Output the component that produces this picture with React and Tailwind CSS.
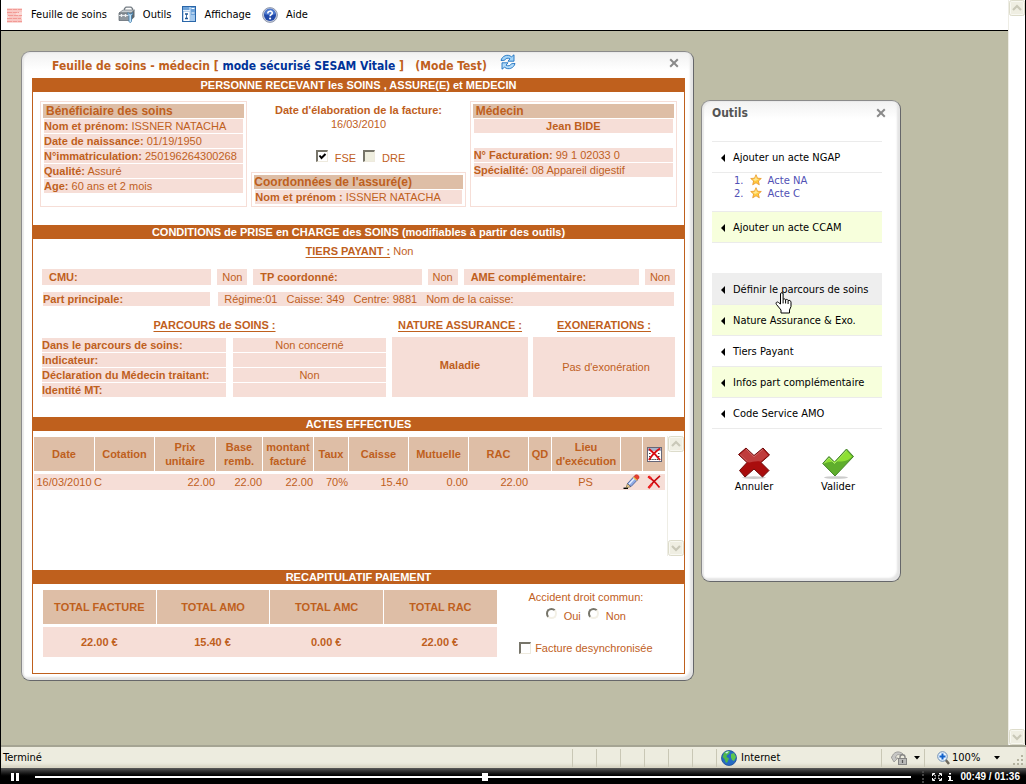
import React from "react";

function Chevron({ up }) {
  return (
    <svg viewBox="0 0 16 16" className="h-4 w-4" aria-hidden="true">
      <rect x="0.5" y="0.5" width="15" height="15" rx="2" fill="#efeee2" stroke="#dddccb" />
      <rect x="1.5" y="1.5" width="13" height="13" rx="1" fill="none" stroke="#f8f8f1" />
      <path d={up ? "M4 10 8 6l4 4" : "M4 6l4 4 4-4"} fill="none" stroke="#c9c8b8" strokeWidth="2.2" />
    </svg>
  );
}

function ScrollBar({ className = "" }) {
  return (
    <div className={`flex w-[17px] shrink-0 flex-col justify-between border-l border-[#eeede5] bg-white ${className}`}>
      <button type="button" aria-label="Défiler vers le haut"><Chevron up /></button>
      <button type="button" aria-label="Défiler vers le bas"><Chevron /></button>
    </div>
  );
}

function SheetIcon() {
  return (
    <svg viewBox="0 0 16 16" className="h-4 w-4" aria-hidden="true">
      <rect x="0" y="1" width="15" height="15" fill="#fbd9d6" />
      <path d="M0 2.5h15M0 5.5h12M1 8.5h14M0 11.5h14M0 14.5h15" stroke="#f29a95" strokeWidth="1" strokeDasharray="5 .5" />
      <path d="M0 4h15M0 7h9M2 10h12M0 13h15" stroke="#f7b6b1" strokeWidth="1" />
    </svg>
  );
}

function ToolboxIcon() {
  return (
    <svg viewBox="0 0 17 17" className="h-[17px] w-[17px]" aria-hidden="true">
      <path d="M6.500 4.500V2.500L8 1.200h5l1.500 1.300V5" fill="none" stroke="#777f86" strokeWidth="1.300" />
      <path d="M1 7 5 4h11.500L13 7z" fill="#c6ccd1" stroke="#6d757c" strokeWidth=".7" />
      <path d="M1 7h12v7.500H1z" fill="#8f979e" stroke="#596168" strokeWidth=".7" />
      <path d="m13 7 3.500-3v7L13 14.500z" fill="#5f686f" />
      <path d="M1 9.500h12" stroke="#e4e8eb" strokeWidth="1" />
      <path d="M3.500 8v3M7.500 8v3" stroke="#eef1f3" strokeWidth="1.300" />
      <path d="M10 6.500c-.5 2 .5 2.800 1 3V15.500c.5 1.300 2 1.300 2.500 0v-6c.8-.5 1.500-1.500 1-3l-1 1.500h-2z" fill="#c3e3f8" stroke="#3f7bab" strokeWidth=".8" />
    </svg>
  );
}

function ViewIcon() {
  return (
    <svg viewBox="0 0 14 17" className="h-[17px] w-[14px]" aria-hidden="true">
      <rect x=".5" y=".5" width="13" height="15" fill="#6ea3d9" stroke="#2a66a8" />
      <path d="M1 4.500h7" stroke="#e2effb" strokeWidth="1" />
      <path d="M8 1v14" stroke="#dcebfa" strokeWidth="1" />
      <rect x="1.500" y="5.500" width="6" height="9.500" fill="#fff" />
      <path d="M3 8h3M3 12.500h3" stroke="#1d5593" strokeWidth="1.600" />
      <path d="M4.500 8v4.500" stroke="#1d5593" strokeWidth=".8" />
      <path d="M9.500 2.500h3M9.500 7h3" stroke="#fff" strokeWidth="1" />
      <rect x="9" y="9" width="4" height="6" fill="#a5caee" />
    </svg>
  );
}

function HelpIcon() {
  return (
    <svg viewBox="0 0 16 16" className="h-4 w-4" aria-hidden="true">
      <circle cx="8" cy="8" r="7.400" fill="#c8cfdf" stroke="#7b859d" strokeWidth=".8" />
      <circle cx="8" cy="8" r="6" fill="#2149a8" />
      <path d="M2.500 7a5.500 5.500 0 0 1 11 0c-3 1.500-8 1.500-11 0z" fill="#4d79cf" />
      <path d="M5.800 6.400c0-3 4.500-2.800 4.500-.4 0 1.700-2.200 1.600-2.200 3.200" fill="none" stroke="#fff" strokeWidth="1.600" />
      <circle cx="8.100" cy="11.500" r="1.100" fill="#fff" />
    </svg>
  );
}

function RefreshIcon() {
  return (
    <svg viewBox="0 0 16 16" className="h-4 w-4" aria-hidden="true">
      <path d="M1 6.500C2 2 7.500-.5 11.500 2.800L14 .8v6.400H8l2-2.400C7.800 3.500 5.500 4.300 4.500 6.300z" fill="#a3d4f8" stroke="#1c6fc0" strokeWidth=".9" />
      <path d="M15 9.500C14 14 8.500 16.500 4.500 13.200L2 15.200V8.800h6l-2 2.400c2.200 1.300 4.500.5 5.500-1.500z" fill="#b4dcf9" stroke="#1c6fc0" strokeWidth=".9" />
    </svg>
  );
}

function CloseIcon() {
  return (
    <svg viewBox="0 0 10 10" className="h-[10px] w-[10px]" aria-hidden="true">
      <path d="m1.200 1.200 7.600 7.600M8.800 1.200 1.200 8.800" stroke="#8a8a8a" strokeWidth="2" />
    </svg>
  );
}

function RedCross() {
  return (
    <svg viewBox="0 0 14 14" className="mx-auto h-[14px] w-[14px]" aria-hidden="true">
      <path d="M1 1.500C5 4 9 8 12.500 12.500" stroke="#d80d12" strokeWidth="1.700" fill="none" />
      <path d="M13 .8C9 4 5 8 1.500 13" stroke="#c4080d" strokeWidth="1.700" fill="none" />
      <path d="M1.500 13 5 9M1.500 1.500 4 3.500" stroke="#e22" strokeWidth="2.500" />
    </svg>
  );
}

function DeleteAllIcon() {
  return (
    <svg viewBox="0 0 15 15" className="mx-auto h-[15px] w-[15px]" aria-hidden="true">
      <rect x=".5" y=".5" width="14" height="14" fill="#fff" stroke="#667" />
      <path d="M1 2.500h13" stroke="#a9b2c8" strokeWidth="3" />
      <path d="M2 6.500h2M11 6.500h2M2 9.500h2M11 9.500h2M3 12.500h9" stroke="#444" strokeWidth="1.200" strokeDasharray="1.500 .7" />
      <path d="M2 2c4 3 8 7 11 11M13 1.500C9 4 5 8 2 13" stroke="#d80d12" strokeWidth="2" fill="none" />
    </svg>
  );
}

function PencilIcon() {
  return (
    <svg viewBox="0 0 17 16" className="mx-auto h-4 w-[17px]" aria-hidden="true">
      <path d="M.5 14.300h4.500" stroke="#000" strokeWidth="1.400" />
      <path d="M3 14 4.500 9.500l3.500 3z" fill="#e9c68d" stroke="#553" strokeWidth=".6" />
      <path d="m4.500 9.500 6.200-6.700 3.600 3.200L8 12.600z" fill="#8fabe6" stroke="#3d548f" strokeWidth=".8" />
      <path d="m6 10.200 5.800-6.200" stroke="#e9f0ff" strokeWidth="1.300" />
      <path d="m10 3.600 3.500 3.200 1-1.100L11 2.500z" fill="#f0c540" />
      <path d="M11 2.500 12.300 1c2-1.200 4.700 1.200 3.500 3.300l-1.300 1.400z" fill="#e8402c" stroke="#a12" strokeWidth=".4" />
    </svg>
  );
}

function StarIcon() {
  return (
    <svg viewBox="0 0 12 12" className="h-3 w-3" aria-hidden="true">
      <path d="m6 .7 1.500 3.500 3.800.3-2.900 2.500.9 3.800L6 8.800l-3.300 2 .9-3.800L.7 4.500l3.800-.3z" fill="#ffc93c" stroke="#e8962a" strokeWidth=".8" />
      <path d="m6 2 .9 2.900L9 5.200 5 7 3 5.200l2-.4z" fill="#ffe792" />
    </svg>
  );
}

function CancelIcon() {
  return (
    <svg viewBox="0 0 32 32" className="h-8 w-8" aria-hidden="true">
      <ellipse cx="16" cy="30.600" rx="12" ry="1.300" fill="#ccc" />
      <path d="m8 1 8 7.500L25 1l6.500 7-8.500 7.500 8 8L24.500 30 16 22 7 30l-5.500-6.500L9 15.500.5 7.500z" fill="#a90d0d" stroke="#6d0b0b" strokeWidth="1" />
      <path d="m8 2 8 7.700 9-7.500 5.200 6-7.500 6.500C17 13 11 17 9.500 14.800L2 7.500z" fill="#bf3d3d" />
      <path d="m8 2 8 7.700 9-7.500M2 7.500l7.500 7.300" fill="none" stroke="#d67d7d" strokeWidth=".8" />
    </svg>
  );
}

function ValidateIcon() {
  return (
    <svg viewBox="0 0 32 32" className="h-8 w-8" aria-hidden="true">
      <ellipse cx="14" cy="30.500" rx="12" ry="1.300" fill="#ccc" />
      <path d="M.7 16.500 7 9.500l5.500 5.500L24.500 2l7 7.500L13 29z" fill="#5fae2c" stroke="#45852a" strokeWidth="1" />
      <path d="M2 16.500 7 11l5.500 5.500L24.500 3.500l5.500 6C23 18 14 12 2 16.500z" fill="#8ee032" />
      <path d="m2 16.500 5-5.500 5.500 5.500L24.500 3.500" fill="none" stroke="#b8f078" strokeWidth=".8" />
    </svg>
  );
}

function GlobeIcon() {
  return (
    <svg viewBox="0 0 16 16" className="h-4 w-4" aria-hidden="true">
      <circle cx="8" cy="8" r="7.500" fill="#256bc4" stroke="#1c4c94" strokeWidth=".8" />
      <path d="M3 3c2-2 5-2.300 6-1.500L8 4 6 5l-.5 2L8 8.500 6.500 12 5 13 3.500 9 1.500 7z" fill="#4fb84a" />
      <path d="m10 4 3-1 2 4-2 4-2-1-1-2.500z" fill="#5cc74e" />
      <path d="M4 3c2-2 4-1.500 4-1.500L6 3.500z" fill="#c7f2ff" />
    </svg>
  );
}

function HandCursor() {
  return (
    <svg viewBox="0 0 17 22" className="pointer-events-none absolute top-[18px] left-[63px] h-[22px] w-[17px]" aria-hidden="true">
      <path d="M5.500 2c0-1.800 2.600-1.800 2.600 0v5.500c.6-1 2.200-.8 2.500.3.800-.7 2.200-.4 2.500.7 1.300-.5 2.900.2 2.900 1.700v4.300l-1.500 3.500v3H6v-3L1.500 12.500c-1.300-2 .8-3.300 2-2L5.500 12z" fill="#fff" stroke="#000" strokeWidth="1" />
      <path d="M8.100 7.500v4M10.600 8v3.500M13.100 9v3" stroke="#000" strokeWidth="1" />
    </svg>
  );
}

function Window({ children, className = "" }) {
  return (
    <section
      className={`rounded-[9px] border border-t-[#8b8b8b] border-r-[#66676a] border-b-[#66676a] border-l-[#8b8b8b] bg-white bg-linear-to-b from-[#f1f1f1] to-white bg-[length:100%_18px] bg-no-repeat shadow-[inset_-3px_-3px_2px_#e4e4e4,inset_2px_1px_1px_#e9e9e9] ${className}`}
    >
      {children}
    </section>
  );
}

const band = "h-[14px] bg-[#bf601d] text-center text-[11px] leading-[14px] font-bold text-white";
const pink = "bg-[#f6ded7]";
const tan = "bg-[#debea6]";

function BoxTitle({ children }) {
  return <h3 className={`h-[14px] pl-[3px] text-[12px] leading-[14px] font-bold ${tan}`}>{children}</h3>;
}

function Line({ label, children, className = "" }) {
  return (
    <p className={`mx-px mt-px h-[14px] whitespace-nowrap ${pink} ${className}`}>
      <b>{label}</b> {children}
    </p>
  );
}

function Check({ id, checked, gray }) {
  return (
    <span className="grid h-3 w-3">
      <input
        id={id}
        type="checkbox"
        defaultChecked={checked}
        className={`peer h-3 w-3 appearance-none border border-t-2 border-l-2 border-t-[#77756a] border-r-[#eeeade] border-b-[#eeeade] border-l-[#77756a] [grid-area:1/1] ${gray ? "bg-[#efeedf]" : "bg-white"}`}
      />
      <svg viewBox="0 0 12 12" className="pointer-events-none hidden h-3 w-3 [grid-area:1/1] peer-checked:block" aria-hidden="true">
        <path d="m3.500 5.500 2 2.500L9.500 4" fill="none" stroke="#000" strokeWidth="2" />
      </svg>
    </span>
  );
}

function Radio({ id }) {
  return (
    <input
      id={id}
      name="accident"
      type="radio"
      className="mb-1 h-[11px] w-[11px] appearance-none rounded-full border-2 border-t-[#77756a] border-r-[#f3f0e6] border-b-[#f3f0e6] border-l-[#77756a] bg-white checked:bg-black"
    />
  );
}

function Patient() {
  return (
    <div className="grid h-[133px] grid-cols-[207fr_214fr_207fr] gap-1 px-[7px] pt-[9px] pb-[18px]">
      <div className="border border-[#f6ded7] p-[2px]">
        <BoxTitle>Bénéficiaire des soins</BoxTitle>
        <Line label="Nom et prénom:">ISSNER NATACHA</Line>
        <Line label="Date de naissance:">01/19/1950</Line>
        <Line label="N°immatriculation:">250196264300268</Line>
        <Line label="Qualité:">Assuré</Line>
        <Line label="Age:">60 ans et 2 mois</Line>
      </div>
      <div className="flex flex-col">
        <p className="pt-[2px] text-center font-bold">Date d'élaboration de la facture:</p>
        <p className="text-center">16/03/2010</p>
        <div className="mt-4 flex items-center justify-center gap-[7px] pl-1">
          <Check id="fse" checked />
          <label htmlFor="fse" className="pt-1">FSE</label>
          <Check id="dre" gray />
          <label htmlFor="dre" className="pt-1">DRE</label>
        </div>
        <div className="mt-auto border border-[#f6ded7] p-[2px]">
          <h3 className={`h-[14px] text-[12px] leading-[14px] font-bold ${tan}`}>Coordonnées de l'assuré(e)</h3>
          <Line label="Nom et prénom :">ISSNER NATACHA</Line>
        </div>
      </div>
      <div className="border border-[#f6ded7] p-[2px]">
        <BoxTitle>Médecin</BoxTitle>
        <Line label="Jean BIDE" className="text-center" />
        <div className="pt-[14px]">
          <Line label="N° Facturation:">99 1 02033 0</Line>
          <Line label="Spécialité:">08 Appareil digestif</Line>
        </div>
      </div>
    </div>
  );
}

const coverage = [["CMU:", "Non"], ["TP coordonné:", "Non"], ["AME complémentaire:", "Non"]];
const parcours = [
  ["Dans le parcours de soins:", "Non concerné"],
  ["Indicateur:", ""],
  ["Déclaration du Médecin traitant:", "Non"],
  ["Identité MT:", ""],
];

function Conditions() {
  return (
    <div className="h-[178px] px-[9px] pt-[5px]">
      <p className="pl-[2px] text-center"><b className="underline underline-offset-2">TIERS PAYANT :</b> Non</p>
      <div className="mt-[11px] grid grid-cols-[169fr_30px_168fr_30px_175fr_30px] gap-[6px] leading-4">
        {coverage.map(([name, value]) => (
          <React.Fragment key={name}>
            <b className={`h-4 pl-[7px] ${pink}`}>{name}</b>
            <span className={`h-4 text-center ${pink}`}>{value}</span>
          </React.Fragment>
        ))}
      </div>
      <div className="mt-[7px] grid grid-cols-[167fr_455fr] gap-2 px-px">
        <b className={pink}>Part principale:</b>
        <p className={`flex gap-[9px] pl-[6px] ${pink}`}>
          <span>Régime:01</span><span>Caisse: 349</span><span>Centre: 9881</span><span>Nom de la caisse:</span>
        </p>
      </div>
      <div className="mt-3 grid grid-cols-[345fr_136fr_142fr] gap-x-[5px]">
        <h3 className="text-center font-bold underline underline-offset-2">PARCOURS de SOINS :</h3>
        <h3 className="text-center font-bold underline underline-offset-2">NATURE ASSURANCE :</h3>
        <h3 className="text-center font-bold underline underline-offset-2">EXONERATIONS :</h3>
        <dl className="mt-[6px] grid grid-cols-[184fr_153fr] gap-x-[7px] gap-y-px pr-px">
          {parcours.map(([name, value]) => (
            <React.Fragment key={name}>
              <dt className={`h-[14px] font-bold whitespace-nowrap ${pink}`}>{name}</dt>
              <dd className={`h-[14px] text-center ${pink}`}>{value}</dd>
            </React.Fragment>
          ))}
        </dl>
        <p className={`mt-[5px] flex items-center justify-center pb-1 font-bold ${pink}`}>Maladie</p>
        <p className={`mt-[5px] flex items-center justify-center pl-1 ${pink}`}>Pas d'exonération</p>
      </div>
    </div>
  );
}

function Acts() {
  const th = `h-[34px] border-l border-white p-0 font-bold text-center ${tan}`;
  const td = `h-[19px] border-t-[3px] border-white p-0 text-right ${pink}`;
  return (
    <div className="flex h-[139px] items-start pt-[5px]">
      <table className="mt-px flex-1 table-fixed border-separate border-spacing-0">
        <colgroup>
          <col className="w-[61px]" /><col className="w-[60px]" /><col className="w-[61px]" /><col className="w-[47px]" />
          <col className="w-[51px]" /><col className="w-[35px]" /><col className="w-[60px]" /><col className="w-[60px]" />
          <col className="w-[60px]" /><col className="w-[23px]" /><col className="w-[69px]" /><col className="w-[22px]" /><col className="w-[23px]" />
        </colgroup>
        <thead>
          <tr>
            <th className={th}>Date</th>
            <th className={th}>Cotation</th>
            <th className={th}>Prix<br />unitaire</th>
            <th className={th}>Base<br />remb.</th>
            <th className={th}>montant<br />facturé</th>
            <th className={th}>Taux</th>
            <th className={th}>Caisse</th>
            <th className={th}>Mutuelle</th>
            <th className={th}>RAC</th>
            <th className={th}>QD</th>
            <th className={th}>Lieu<br />d'exécution</th>
            <th className={th}></th>
            <th className={th}><button type="button" aria-label="Tout supprimer" className="block w-full"><DeleteAllIcon /></button></th>
          </tr>
        </thead>
        <tbody>
          <tr>
            <td className={`${td} border-l`}><span className="block text-center">16/03/2010</span></td>
            <td className={td}><span className="block text-left">C</span></td>
            <td className={td}>22.00</td>
            <td className={td}>22.00</td>
            <td className={td}>22.00</td>
            <td className={td}>70%</td>
            <td className={td}>15.40</td>
            <td className={td}>0.00</td>
            <td className={td}>22.00</td>
            <td className={td}></td>
            <td className={td}><span className="block text-center">PS</span></td>
            <td className={td}><button type="button" aria-label="Modifier" className="block w-full"><PencilIcon /></button></td>
            <td className={td}><button type="button" aria-label="Supprimer" className="block w-full"><RedCross /></button></td>
          </tr>
        </tbody>
      </table>
      <ScrollBar className="ml-[2px] h-[120px]" />
    </div>
  );
}

function Recap() {
  const th = `h-[34px] border-l border-white p-0 font-bold text-center ${tan}`;
  const td = `h-[33px] border-t-[3px] border-white p-0 font-bold text-center ${pink}`;
  return (
    <div className="grid h-[89px] grid-cols-[454fr_178fr] items-start pt-[6px] pr-[9px] pl-[9px]">
      <table className="w-full table-fixed border-separate border-spacing-0">
        <thead>
          <tr>
            <th className={th}>TOTAL FACTURE</th>
            <th className={th}>TOTAL AMO</th>
            <th className={th}>TOTAL AMC</th>
            <th className={th}>TOTAL RAC</th>
          </tr>
        </thead>
        <tbody>
          <tr>
            <td className={`${td} border-l`}>22.00 €</td>
            <td className={td}>15.40 €</td>
            <td className={td}>0.00 €</td>
            <td className={td}>22.00 €</td>
          </tr>
        </tbody>
      </table>
      <div className="flex flex-col items-center">
        <p>Accident droit commun:</p>
        <div className="mt-1 flex items-center gap-[7px]">
          <Radio id="oui" /><label htmlFor="oui">Oui</label>
          <Radio id="non" /><label htmlFor="non">Non</label>
        </div>
        <div className="mt-[18px] flex items-center gap-1">
          <Check id="desync" /><label htmlFor="desync">Facture desynchronisée</label>
        </div>
      </div>
    </div>
  );
}

function Tool({ children, tone = "", cursor }) {
  return (
    <button type="button" className={`relative flex h-[31px] w-full items-center gap-[7px] border-b border-[#ebebeb] pt-px pl-2 text-left ${tone} ${cursor ? "z-10" : ""}`}>
      <svg viewBox="0 0 6 8" className="h-2 w-[6px]" aria-hidden="true"><path d="M5 0v8L1 4z" fill="#000" /></svg>
      {children}
      {cursor && <HandCursor />}
    </button>
  );
}

function Tools() {
  return (
    <Window className="mt-[49px] h-[482px] w-[200px] shrink-0 px-[10px] pt-1">
      <header className="flex items-center justify-between pr-1">
        <h2 className="text-[12px] leading-4 font-bold text-[#555]">Outils</h2>
        <button type="button" aria-label="Fermer les outils"><CloseIcon /></button>
      </header>
      <div className="mt-5 mr-2 text-black">
        <div className="border-t border-[#ebebeb]"><Tool>Ajouter un acte NGAP</Tool></div>
        <ol className="h-[39px] border-b border-[#ebebeb] pt-px pl-[22px] font-['DejaVu_Sans',sans-serif] text-[10px] leading-[13px] text-[#5151b5]">
          <li className="flex items-start gap-[6px]">1. <StarIcon /><a href="#na">Acte NA</a></li>
          <li className="flex items-start gap-[6px]">2. <StarIcon /><a href="#c">Acte C</a></li>
        </ol>
        <Tool tone="bg-[#f7ffdc]">Ajouter un acte CCAM</Tool>
        <div className="mt-[30px] border-t border-[#eeeeee]">
          <Tool tone="bg-[#eeeeee]" cursor>Définir le parcours de soins</Tool>
          <Tool tone="bg-[#f7ffdc]">Nature Assurance &amp; Exo.</Tool>
          <Tool>Tiers Payant</Tool>
          <Tool tone="bg-[#f7ffdc]">Infos part complémentaire</Tool>
          <Tool>Code Service AMO</Tool>
        </div>
      </div>
      <div className="mt-[18px] mr-[10px] grid grid-cols-2 text-black">
        <button type="button" className="flex flex-col items-center leading-4"><CancelIcon />Annuler</button>
        <button type="button" className="flex flex-col items-center leading-4"><ValidateIcon />Valider</button>
      </div>
    </Window>
  );
}

function Invoice() {
  return (
    <Window className="h-[630px] max-w-[673px] flex-1 pt-[2px] pr-2 pl-[10px]">
      <header className="flex h-6 items-start justify-between pr-[6px] pl-5">
        <div className="flex items-start gap-[13px]">
          <h1 className="pt-[2px] text-[12px] leading-5 font-bold whitespace-pre text-[#bf601d]">
            Feuille de soins - médecin [ <span className="text-[#003399]">mode sécurisé SESAM Vitale</span> ]   (Mode Test)
          </h1>
          <button type="button" aria-label="Actualiser"><RefreshIcon /></button>
        </div>
        <button type="button" aria-label="Fermer" className="mt-1"><CloseIcon /></button>
      </header>
      <div className="border border-t-0 border-[#bf601d] bg-white font-['Liberation_Sans',Arial,sans-serif] text-[11px] leading-[14px] text-[#bf601d]">
        <h2 className={band}>PERSONNE RECEVANT les SOINS , ASSURE(E) et MEDECIN</h2>
        <Patient />
        <h2 className={band}>CONDITIONS de PRISE en CHARGE des SOINS (modifiables à partir des outils)</h2>
        <Conditions />
        <h2 className={band}>ACTES EFFECTUES</h2>
        <Acts />
        <h2 className={band}>RECAPITULATIF PAIEMENT</h2>
        <Recap />
      </div>
    </Window>
  );
}

function Caret() {
  return <svg viewBox="0 0 6 4" className="h-1 w-[6px]" aria-hidden="true"><path d="M0 0h6L3 3.500z" fill="#000" /></svg>;
}

function StatusBar() {
  const cell = "h-[18px] w-6 border-l border-[#c9c7b5]";
  return (
    <div className="flex h-[23px] items-center border-t-2 border-[#a5a493] bg-[#edecdf] shadow-[inset_0_-3px_3px_#d8d5c4]">
      <p className="flex-1 pl-[2px]">Terminé</p>
      <span className={cell} /><span className={cell} /><span className={cell} /><span className={cell} /><span className={cell} /><span className={cell} />
      <div className="flex h-[18px] w-[165px] items-center gap-1 border-l border-[#c9c7b5] pl-1"><GlobeIcon />Internet</div>
      <div className="flex h-[18px] w-[43px] items-center gap-[6px] border-l border-[#c9c7b5] pl-[9px]">
        <svg viewBox="0 0 17 16" className="h-4 w-[17px]" aria-hidden="true">
          <path d="M1 7c1-5 7-7 11-3l-3 1C7 4 5 5 4.500 8L7 8 3 12 0 7z" fill="#c6c6c4" stroke="#8d8d8a" strokeWidth=".7" />
          <path d="M9 9V7c0-3 5-3 5 0v2" fill="none" stroke="#858583" strokeWidth="1.400" />
          <rect x="7.500" y="8.500" width="8" height="6" fill="#b9b9b7" stroke="#858583" />
          <path d="M11.500 10v3" stroke="#555" strokeWidth="1.200" />
        </svg>
        <Caret />
      </div>
      <div className="flex h-[18px] w-[102px] items-center border-l border-[#c9c7b5] pr-[2px] pl-3">
        <svg viewBox="0 0 13 14" className="mr-[2px] h-[14px] w-[13px]" aria-hidden="true">
          <path d="m8 8 4 5" stroke="#6f6a5e" strokeWidth="2.500" />
          <circle cx="5.500" cy="5.500" r="4.800" fill="#e6f3ff" stroke="#6d8db2" />
          <path d="M5.500 2.500v6M2.500 5.500h6" stroke="#1161c9" strokeWidth="2" />
        </svg>
        <span className="flex-1">100%</span>
        <Caret />
        <svg viewBox="0 0 12 12" className="mt-1 ml-3 h-3 w-3" aria-hidden="true">
          <path d="M9 2h2M5 6h2M9 6h2M1 10h2M5 10h2M9 10h2" stroke="#b5b3a0" strokeWidth="2" />
        </svg>
      </div>
    </div>
  );
}

function Player() {
  return (
    <div className="flex h-4 items-center bg-linear-to-b from-[#5a5a5a] to-black to-60% pt-[2px] pr-[6px] pl-[10px] text-white">
      <button type="button" aria-label="Pause" className="flex gap-[2px]">
        <span className="h-2 w-[3px] bg-white" /><span className="h-2 w-[3px] bg-white" />
      </button>
      <div className="mr-[11px] ml-4 flex flex-1 items-center">
        <span className="h-[2px] w-[51%] bg-white" />
        <span className="h-2 w-[6px] bg-white" />
        <span className="h-[2px] flex-1 bg-white" />
      </div>
      <span className="mr-2 h-3 border-l-2 border-dotted border-[#444]" />
      <button type="button" aria-label="Plein écran">
        <svg viewBox="0 0 10 8" className="h-2 w-[10px]" aria-hidden="true">
          <path d="M.5 3V.5h2.500M7 .5h2.500V3M9.500 5v2.500H7M3 7.500H.5V5M1 1l3 2.200M9 1 6 3.200M1 7l3-2.200M9 7 6 4.800" fill="none" stroke="#fff" strokeWidth="1" />
        </svg>
      </button>
      <button type="button" aria-label="Informations" className="mr-2 ml-[6px]">
        <svg viewBox="0 0 5 8" className="h-2 w-[5px]" aria-hidden="true"><path d="M1 0h2v1.500H1zM0 3h3v4h2v1H0V7h1V4H0z" fill="#fff" /></svg>
      </button>
      <span className="font-['Liberation_Sans',sans-serif] text-[10px] leading-3 font-bold">00:49 / 01:36</span>
    </div>
  );
}

const menus = [
  ["Feuille de soins", SheetIcon],
  ["Outils", ToolboxIcon],
  ["Affichage", ViewIcon],
  ["Aide", HelpIcon],
];

export default function App() {
  return (
    <div className="flex min-h-screen flex-col border-l border-black bg-[#bebda6] font-['DejaVu_Sans_Condensed','Noto_Sans',sans-serif] text-[11px] leading-[14px] text-black">
      <div className="flex flex-1 border-r border-black">
        <div className="flex min-w-0 flex-1 flex-col">
          <nav className="flex h-[31px] items-center gap-[11px] border-b border-black bg-white pb-px pl-[6px]">
            {menus.map(([name, Icon]) => (
              <button key={name} type="button" className="flex items-center gap-2"><Icon />{name}</button>
            ))}
          </nav>
          <main className="flex flex-1 items-start gap-[7px] pt-5 pr-5 pl-5">
            <Invoice />
            <Tools />
          </main>
        </div>
        <ScrollBar />
      </div>
      <StatusBar />
      <Player />
    </div>
  );
}
